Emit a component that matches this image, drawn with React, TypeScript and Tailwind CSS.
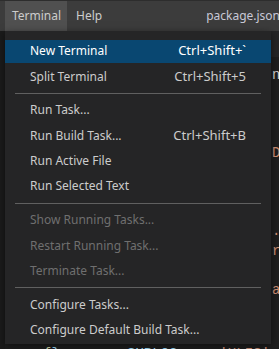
import React from "react"

// ─── Menu data ────────────────────────────────────────────

type Entry =
  | { label: string; keys?: string; disabled?: boolean; active?: boolean }
  | "sep"

const entries: Entry[] = [
  { label: "New Terminal", keys: "Ctrl+Shift+`", active: true },
  { label: "Split Terminal", keys: "Ctrl+Shift+5" },
  "sep",
  { label: "Run Task..." },
  { label: "Run Build Task...", keys: "Ctrl+Shift+B" },
  { label: "Run Active File" },
  { label: "Run Selected Text" },
  "sep",
  { label: "Show Running Tasks...", disabled: true },
  { label: "Restart Running Task...", disabled: true },
  { label: "Terminate Task...", disabled: true },
  "sep",
  { label: "Configure Tasks..." },
  { label: "Configure Default Build Task..." },
]

const ui = "font-['Noto_Sans','Open_Sans',sans-serif]"
const mono = "font-['Liberation_Mono','DejaVu_Sans_Mono',monospace]"

export default function App() {
  return (
    <div className={`relative w-[279px] h-[349px] overflow-hidden bg-[#1e1e1e] flex flex-col ${ui}`}>
      {/* Title bar */}
      <div className="h-[31px] shrink-0 bg-[#3c3c3c] border-t border-[#2d2d2d] flex items-stretch text-[12px] text-[#cccccc] overflow-hidden">
        <div className="shrink-0 ml-[5px] w-[62px] bg-[#505050] flex items-center pl-[7px]">Terminal</div>
        <div className="shrink-0 flex items-center pl-[9px]">Help</div>
        <div className="shrink-0 flex items-center ml-[104px] whitespace-nowrap text-[#c8c8d6]">package.json -</div>
      </div>

      {/* Workbench behind the menu */}
      <div className="flex-1 flex">
        <div className="w-[5px] shrink-0 bg-[#1b1b1b]" />
        <div className="flex-1 flex flex-col">
          <div className="h-[26px] shrink-0 bg-[#252526]" />
          <div className={`flex-1 pt-[9px] text-[14px] ${mono} whitespace-pre`}>
            <div className="h-[19.5px] leading-[19.5px] pl-[267px] text-[#d4d4d4]">no</div>
            <div className="h-[19.5px]" />
            <div className="h-[19.5px]" />
            <div className="h-[19.5px]" />
            <div className="h-[19.5px] leading-[19.5px] pl-[267px]">
              <span className="text-[#ce9178]">D</span><span className="text-[#d4d4d4]">;</span>
            </div>
            <div className="h-[19.5px]" />
            <div className="h-[19.5px]" />
            <div className="h-[19.5px]" />
            <div className="h-[19.5px] leading-[19.5px] pl-[267px]">
              <span className="text-[#ce9178]">.</span><span className="text-[#4fc1ff]">]</span>
            </div>
            <div className="h-[19.5px] leading-[19.5px] pl-[267px] text-[#ce9178]">r</div>
            <div className="h-[19.5px]" />
            <div className="h-[19.5px] leading-[19.5px] pl-[267px] text-[#ce9178]">a</div>
            <div className="h-[19.5px]" />
            <div className="h-[19.5px]" />
            <div className="mt-[6px] h-[19.5px] leading-[19.5px] pl-[38px]">
              <span className="text-[#dcdcaa]">{"{"}</span>
              <span className="text-[#9cdcfe]">{"}        "}</span>
              <span className="text-[#9cdcfe]">{"SUBLOG"}</span>
              <span className="text-[#d4d4d4]">{"  .  "}</span>
              <span className="text-[#ce9178]">{"'ULIS'"}</span>
            </div>
          </div>
        </div>
      </div>

      {/* Dropdown menu */}
      <div className="absolute left-[5px] top-[31px] w-[266px] bg-[#252526] pt-[7.5px] pb-px flex flex-col shadow-[0_2px_8px_rgba(0,0,0,0.5)] text-[12px]">
        {entries.map((e, i) =>
          e === "sep" ? (
            <div key={i} className="h-[8.3px] shrink-0 flex items-center px-[10px]">
              <div className="h-px w-full bg-[#606060]" />
            </div>
          ) : (
            <div key={i} className="h-[25.4px] shrink-0 py-px flex">
              <div
                className={`flex-1 flex items-center justify-between pl-[25px] pr-[25px] whitespace-nowrap
                  ${e.active ? "bg-[#094771] text-white" : e.disabled ? "text-[#6f6f6f]" : "text-[#cccccc]"}`}
              >
                <span>{e.label}</span>
                {e.keys && <span className="text-[13px]">{e.keys}</span>}
              </div>
            </div>
          )
        )}
      </div>
    </div>
  )
}
